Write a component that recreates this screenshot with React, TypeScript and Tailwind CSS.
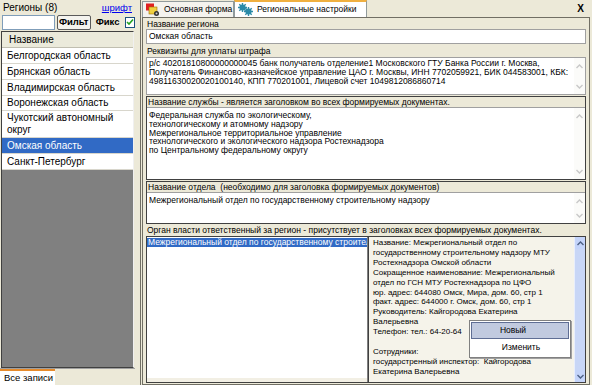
import React from "react";

const regions: { name: React.ReactNode; h: string; sel?: boolean }[] = [
  { name: "Белгородская область", h: "h-[16px]" },
  { name: "Брянская область", h: "h-[16px]" },
  { name: "Владимирская область", h: "h-[16px]" },
  { name: "Воронежская область", h: "h-[15px]" },
  { name: <>Чукотский автономный<br />округ</>, h: "h-[27px]" },
  { name: "Омская область", h: "h-[16px]", sel: true },
  { name: "Санкт-Петербург", h: "h-[16px]" },
];

const info = [
  "Название: Межрегиональный отдел по",
  "государственному строительному надзору МТУ",
  "Ростехнадзора Омской области",
  "Сокращенное наименование: Межрегиональный",
  "отдел по ГСН МТУ Ростехнадзора по ЦФО",
  "юр. адрес: 644080 Омск, Мира, дом. 60, стр 1",
  "факт. адрес: 644000 г. Омск, дом. 60, стр 1",
  "Руководитель: Кайгородова Екатерина",
  "Валерьевна",
  "Телефон: тел.: 64-20-64",
  "\u00a0",
  "Сотрудники:",
  "государстренный инспектор:  Кайгородова",
  "Екатерина Валерьевна",
];

function Chevron({ up, color }: { up?: boolean; color: string }) {
  return (
    <svg width="7" height="5" viewBox="0 0 7 5">
      <path d={up ? "M0.5 4 L3.5 1 L6.5 4" : "M0.5 1 L3.5 4 L6.5 1"} fill="none" stroke={color} strokeWidth="1.4" />
    </svg>
  );
}

function PaleScroll() {
  return (
    <div className="w-[11px] flex flex-col justify-between bg-[#fbfbf9] py-[3px]">
      <div className="h-[10px] flex items-center justify-center"><Chevron up color="#c8c8c8" /></div>
      <div className="h-[10px] flex items-center justify-center"><Chevron color="#c8c8c8" /></div>
    </div>
  );
}

function Label({ children }: { children: React.ReactNode }) {
  return <div className="h-[10px] leading-[10px] text-[8.5px] text-black pl-[1px] whitespace-nowrap overflow-hidden">{children}</div>;
}

export default function App() {
  return (
    <div className="w-[592px] h-[385px] overflow-hidden flex bg-[#ece9d8] font-['Liberation_Sans',Arial,sans-serif] text-black">
      {/* left panel */}
      <div className="w-[135px] flex flex-col">
        <div className="h-[13px] flex items-end justify-between px-[3px]">
          <span className="text-[10px] leading-[11px]">Регионы (8)</span>
          <span className="text-[9.5px] leading-[11px] text-[#0000ee] underline">шрифт</span>
        </div>
        <div className="h-[18px] flex items-center gap-[2px] pl-[2px]">
          <div className="w-[56px] h-[15px] bg-white border border-[#7f9db9]" />
          <div className="w-[36px] h-[15px] rounded-[2px] border border-[#5a5a5a] bg-[#f4f3ee] flex items-center justify-center text-[9.5px] font-bold">Фильт</div>
          <span className="ml-[3px] text-[9.5px] font-bold">Фикс</span>
          <div className="ml-[3px] w-[11px] h-[11px] bg-white border border-[#1c5180] flex items-center justify-center">
            <svg width="8" height="8" viewBox="0 0 8 8"><path d="M1 4 L3 6 L7 1.5" fill="none" stroke="#21a121" strokeWidth="1.6" /></svg>
          </div>
        </div>
        <div className="mx-[1px] flex-1 flex flex-col border border-[#404040] border-r-[#f0f0f0] bg-[#808080]">
          <div className="h-[16px] bg-[#ebeadb] border-b border-[#c0beb0] flex items-center pl-[7px] text-[10px]">Название</div>
          {regions.map((r, i) => (
            <div
              key={i}
              className={`${r.h} flex items-center pl-[5px] text-[10px] leading-[12px] border-b border-[#d8d6cc] ${r.sel ? "bg-[#316ac5] text-white" : "bg-white"}`}
            >
              <span>{r.name}</span>
            </div>
          ))}
          <div className="flex-1" />
        </div>
        <div className="h-[17px] flex border-t border-[#a0a0a0]">
          <div className="w-[55px] bg-white border-t-2 border-[#e68b2c] flex items-center pl-[4px] text-[9.5px] whitespace-nowrap">Все записи</div>
        </div>
      </div>

      {/* splitter */}
      <div className="w-[7px] flex">
        <div className="w-[5px] bg-[#ece9d8]" />
        <div className="w-[1px] bg-[#716f64]" />
      </div>

      {/* right panel */}
      <div className="flex-1 flex flex-col pr-[2px]">
        <div className="h-[17px] flex items-end relative">
          <div className="h-[16px] w-[92px] bg-[#f4f3ee] border border-b-0 border-[#919b9c] flex items-center gap-[3px] pl-[2px] text-[8.5px] whitespace-nowrap">
            <svg width="16" height="14" viewBox="0 0 16 14" className="shrink-0">
              <rect x="1" y="0.5" width="8" height="7" fill="#e02020" />
              <rect x="4" y="4" width="8" height="7" fill="#f0d040" stroke="#a07000" strokeWidth="0.6" />
              <circle cx="11.5" cy="10.5" r="2.5" fill="#303030" />
              <circle cx="11.5" cy="10.5" r="1" fill="#d0d0d0" />
            </svg>
            <span>Основная форма</span>
          </div>
          <div className="h-[17px] w-[133px] bg-white border border-b-0 border-[#919b9c] border-t-2 border-t-[#f0b040] flex items-center gap-[4px] pl-[3px] text-[8.5px] whitespace-nowrap">
            <svg width="15" height="13" viewBox="0 0 15 13" className="shrink-0">
              <g fill="#2a8aa8">
                <circle cx="4.5" cy="4.5" r="3" />
                <circle cx="10.5" cy="8.5" r="3" />
              </g>
              <g fill="#fff">
                <circle cx="4.5" cy="4.5" r="1" />
                <circle cx="10.5" cy="8.5" r="1" />
              </g>
              <g stroke="#2a8aa8" strokeWidth="1.4">
                <path d="M4.5 0 V9 M0 4.5 H9 M1.3 1.3 L7.7 7.7 M7.7 1.3 L1.3 7.7" />
                <path d="M10.5 4 V13 M6 8.5 H15 M7.3 5.3 L13.7 11.7 M13.7 5.3 L7.3 11.7" />
              </g>
            </svg>
            <span>Региональные настройки</span>
          </div>
          <span className="absolute right-[6px] top-[3px] text-[10px] font-bold leading-[11px]">X</span>
        </div>

        <div className="flex-1 flex flex-col border border-[#716f64] px-[3px] pt-[1px] pb-[1px]">
          <Label>Название региона</Label>
          <div className="h-[15px] bg-white border border-[#a0a0a0] flex items-center pl-[2px] text-[8.5px]">Омская область</div>
          <div className="h-[2px]" />
          <Label>Реквизиты для уплаты штрафа</Label>
          <div className="mt-[1px] h-[38px] bg-white border border-[#a0a0a0] flex">
            <div className="flex-1 px-[2px] pt-[1px] text-[8.5px] leading-[9px] whitespace-nowrap overflow-hidden">
              р/с 40201810800000000045 банк получатель отделение1 Московского ГТУ Банка России г. Москва,<br />
              Получатель Финансово-казначейское управление ЦАО г. Москвы, ИНН 7702059921, БИК 044583001, КБК:<br />
              49811630020020100140, КПП 770201001, Лицевой счет 1049812086860714
            </div>
            <PaleScroll />
          </div>

          <div className="mt-[1px] border border-[#404040] flex flex-col">
            <Label>Название службы - является заголовком во всех формируемых документах.</Label>
            <div className="h-[72px] bg-white border-t border-[#a0a0a0] flex">
              <div className="flex-1 px-[2px] pt-[3px] text-[8.5px] leading-[8.8px]">
                Федеральная служба по экологическому,<br />
                технологическому и атомному надзору<br />
                Межрегиональное территориальное управление<br />
                технологического и экологического надзора Ростехнадзора<br />
                по Центральному федеральному округу
              </div>
              <PaleScroll />
            </div>
          </div>

          <div className="mt-[1px] border border-[#404040] flex flex-col">
            <Label>Название отдела&nbsp;&nbsp;(необходимо для заголовка формируемых документов)</Label>
            <div className="h-[31px] bg-white border-t border-[#a0a0a0] flex">
              <div className="flex-1 px-[2px] pt-[3px] text-[8.5px] leading-[9px] whitespace-nowrap">
                Межрегиональный отдел по государственному строительному надзору
              </div>
              <PaleScroll />
            </div>
          </div>

          <div className="mt-[1px]"><Label>Орган власти ответственный за регион - присутствует в заголовках всех формируемых документах.</Label></div>
          <div className="flex-1 flex border border-[#404040] mt-[1px]">
            <div className="w-[221px] flex flex-col bg-white border-r border-[#808080] overflow-hidden">
              <div className="flex-1 pt-[1px]">
                <div className="h-[9px] bg-[#316ac5] text-white text-[8.5px] leading-[9px] whitespace-nowrap overflow-hidden pl-[1px]">
                  Межрегиональный отдел по государственному строительному надзору
                </div>
              </div>
              <div className="h-[4px] bg-[#f2efe4]" />
            </div>
            <div className="flex-1 flex relative bg-[#f5f3ea] border-l border-[#404040]">
              <div className="flex-1 pl-[4px] pt-[1px] text-[8px] leading-[9.9px] whitespace-pre overflow-hidden">
                {info.map((l, i) => (
                  <div key={i}>{l}</div>
                ))}
              </div>
              <div className="w-[11px] flex flex-col justify-between bg-[#c8d6f6] border-l border-[#e8eefc]">
                <div className="h-[12px] bg-[#c4d4fa] flex items-center justify-center"><Chevron up color="#4d6185" /></div>
                <div className="h-[12px] bg-[#c4d4fa] flex items-center justify-center"><Chevron color="#4d6185" /></div>
              </div>
              <div className="absolute left-[100px] top-[83px] w-[102px] bg-white border border-[#808080] shadow-[1px_1px_0_#a0a0a0] p-[1px] text-[8.5px]">
                <div className="h-[17px] bg-[#c1cadf] border border-[#5f6e94] flex items-center justify-center pr-[14px]">Новый</div>
                <div className="h-[17px] flex items-center justify-center pl-[2px]">Изменить</div>
              </div>
            </div>
          </div>
        </div>
      </div>
    </div>
  );
}
